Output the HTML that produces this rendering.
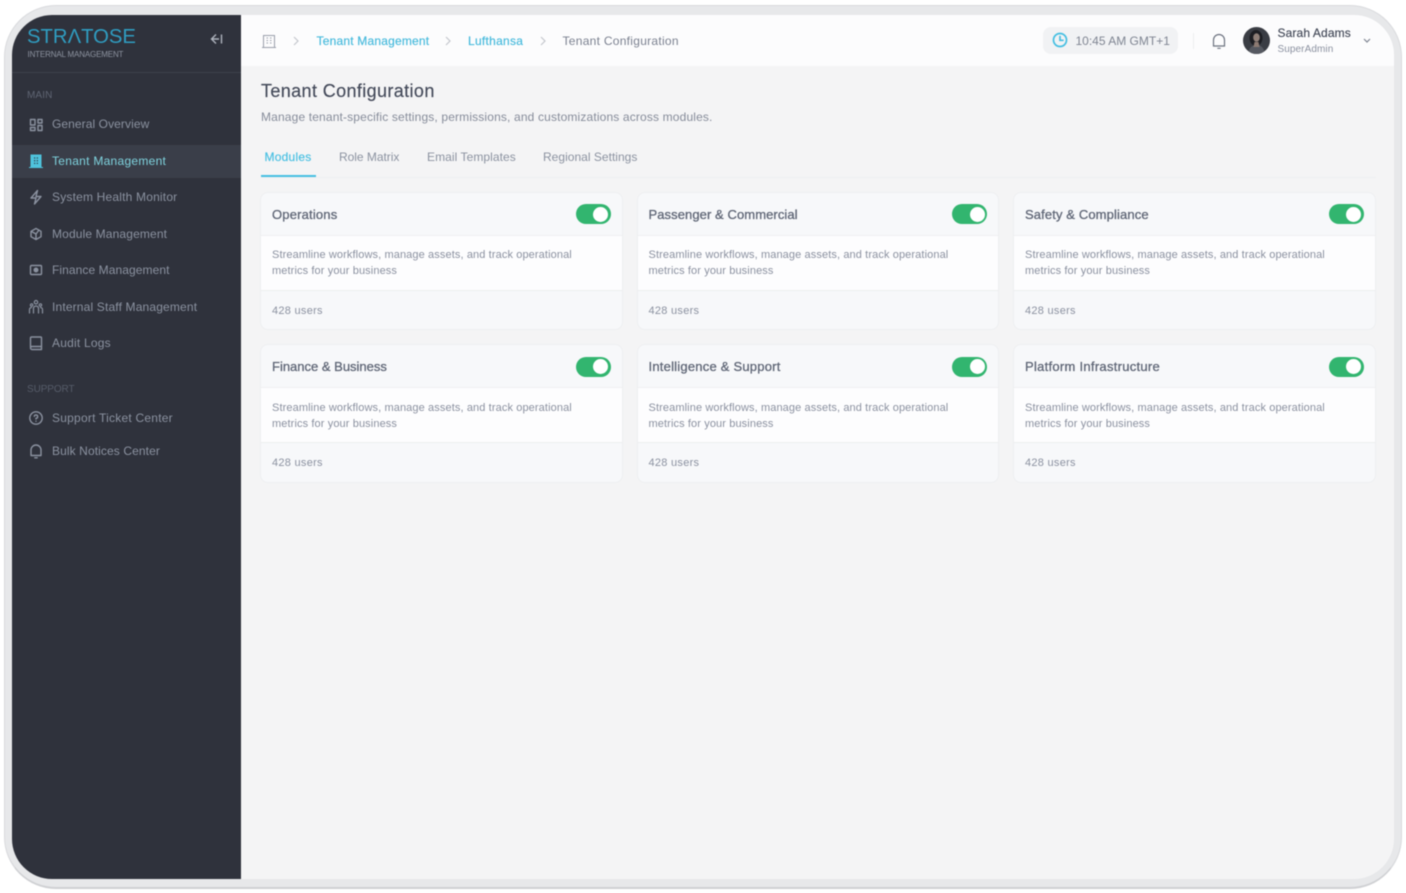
<!DOCTYPE html>
<html><head><meta charset="utf-8">
<style>
*{box-sizing:border-box;margin:0;padding:0}
html,body{width:1406px;height:893px;background:#fff;overflow:hidden;font-family:"Liberation Sans",sans-serif}
.a{position:absolute;white-space:nowrap}
#outer{position:absolute;left:4px;top:5px;width:1398px;height:884px;border-radius:52px;background:#e7e8ea;border:1px solid #d9dadd;border-bottom:2px solid #cfd0d3;filter:blur(.4px)}
#screen{position:absolute;left:12px;top:15px;width:1382px;height:864px;border-radius:40px;background:#f4f4f5;overflow:hidden;filter:blur(.5px)}
#side{position:absolute;left:0;top:0;width:229px;height:864px;background:#2f323c}
#top{position:absolute;left:229px;top:0;right:0;height:51px;background:#fcfcfd}
.nav{position:absolute;left:40px;font-size:12px;color:#8b92a0;line-height:16px;white-space:nowrap}
.sec{position:absolute;left:15px;font-size:10px;color:#5f6573;line-height:12px}
.ic{position:absolute;left:16px;width:16px;height:16px;fill:none;stroke:#8b92a0;stroke-width:1.4;stroke-linecap:round;stroke-linejoin:round}
.card{position:absolute;width:362.500px;height:138.500px;border-radius:8px;background:#f7f8fa;border:1px solid #eeeff1;overflow:hidden}
.card .t{position:absolute;left:11px;top:14px;font-size:13px;color:#5f6676;line-height:16px;font-weight:400;-webkit-text-stroke:.3px #5f6676;white-space:nowrap}
.card .b{position:absolute;left:0;right:0;top:42px;height:56px;background:#fdfdfe;border-top:1px solid #eff0f2;border-bottom:1.500px solid #eceef0}
.card .d{position:absolute;left:11px;top:11.500px;font-size:11px;letter-spacing:.11px;color:#8b91a0;line-height:16px;white-space:nowrap}
.card .u{position:absolute;left:11px;top:110px;font-size:11px;letter-spacing:.28px;color:#8b91a0;line-height:16px}
.tg{position:absolute;left:314.500px;top:11.500px;width:35px;height:20px;border-radius:10px;background:#32b56f}
.tg i{position:absolute;left:17.500px;top:2.500px;width:15px;height:15px;border-radius:50%;background:#fff}
.tab{position:absolute;top:134px;font-size:12px;color:#8b92a0;line-height:16px;white-space:nowrap}
.crumb{position:absolute;top:18px;font-size:12px;line-height:16px;white-space:nowrap}
</style></head><body>
<div id="outer"></div>
<div id="screen">
 <div id="side">
  <div class="a" style="left:15px;top:9px;font-size:20.300px;letter-spacing:0;color:#2f9cc0;line-height:26px;font-weight:400">STR&#923;TOSE</div>
  <div class="a" style="left:15.500px;top:33.500px;font-size:8px;letter-spacing:-.16px;color:#8d93a0;line-height:12px">INTERNAL MANAGEMENT</div>
  <svg class="a" style="left:196px;top:16px;stroke:#aeb3bd;fill:none;stroke-width:1.400" width="16" height="16" viewBox="0 0 16 16"><path d="M8 3.500 3.500 8 8 12.500M3.500 8H11M13.500 3.500v9"/></svg>
  <div class="a" style="left:0;top:57px;width:229px;height:1px;background:#3d414b"></div>
  <div class="sec" style="top:75px;letter-spacing:.1px">MAIN</div>

  <svg class="ic" style="top:102px" viewBox="0 0 16 16"><path d="M2.500 2.500h4.500v5.500H2.500zM10 2.500h4v3.500h-4zM10 8.500h4v5h-4zM2.500 10.500h4.500v3H2.500z"/></svg>
  <div class="nav" style="top:101px;letter-spacing:.08px">General Overview</div>

  <div class="a" style="left:0;top:130px;width:229px;height:32.500px;background:#3a3e49"></div>
  <svg class="a" style="left:16px;top:138px" width="16" height="16" viewBox="0 0 16 16"><rect x="2.500" y="1.500" width="11" height="12.500" fill="#4fc3dc"/><path d="M1 14.500h14" stroke="#4fc3dc" stroke-width="1"/><path d="M6 5h1.300M8.700 5H10M6 7.700h1.300M8.700 7.700H10M6 10.400h1.300M8.700 10.400H10" stroke="#2f4a58" stroke-width="1.300"/></svg>
  <div class="nav" style="top:138px;color:#7fd3de;letter-spacing:.28px">Tenant Management</div>

  <svg class="ic" style="top:174px" viewBox="0 0 16 16"><path d="M9.500 1.500 3 9h5l-1.500 6L13 7.500H8z"/></svg>
  <div class="nav" style="top:174px;letter-spacing:.19px">System Health Monitor</div>

  <svg class="ic" style="top:211px" viewBox="0 0 16 16"><path d="M8 2.500 13 5.300v5.400L8 13.500 3 10.700V5.300zM3 5.300 8 8v5.500M8 8l3-4"/></svg>
  <div class="nav" style="top:211px;letter-spacing:.14px">Module Management</div>

  <svg class="ic" style="top:247px" viewBox="0 0 16 16"><rect x="2.500" y="3.500" width="11" height="9" rx="1"/><circle cx="8" cy="8" r="1.800" fill="#8b92a0"/></svg>
  <div class="nav" style="top:247px;letter-spacing:.08px">Finance Management</div>

  <svg class="ic" style="top:284px;stroke-width:1.200" viewBox="0 0 16 16"><circle cx="8" cy="3.200" r="1.700"/><circle cx="3.600" cy="6" r="1.200"/><circle cx="12.400" cy="6" r="1.200"/><path d="M5.500 14V9.500a2.500 2.500 0 0 1 5 0V14M1.500 14v-3.500A2 2 0 0 1 3.500 8.500M14.500 14v-3.500a2 2 0 0 0-2-2"/></svg>
  <div class="nav" style="top:284px;letter-spacing:.16px">Internal Staff Management</div>

  <svg class="ic" style="top:320px" viewBox="0 0 16 16"><path d="M2.500 12V3a1 1 0 0 1 1-1h9a1 1 0 0 1 1 1v11.500h-9.500a1.500 1.500 0 0 1-1.500-1.500 1.500 1.500 0 0 1 1.500-1.500h9.500"/></svg>
  <div class="nav" style="top:320px;letter-spacing:.22px">Audit Logs</div>

  <div class="sec" style="top:369px;letter-spacing:-.1px;color:#565c69">SUPPORT</div>

  <svg class="ic" style="top:395px" viewBox="0 0 16 16"><circle cx="8" cy="8" r="6.200"/><path d="M6.300 6.300A1.700 1.700 0 1 1 8 8.300v.7M8 11.200v.1"/></svg>
  <div class="nav" style="top:395px;letter-spacing:.23px">Support Ticket Center</div>

  <svg class="ic" style="top:428px" viewBox="0 0 16 16"><path d="M3 12.500V7a5 5 0 0 1 10 0v5.500zM6.800 14.800h2.400"/></svg>
  <div class="nav" style="top:428px;letter-spacing:.1px">Bulk Notices Center</div>
 </div>

 <div id="top">
  <svg class="a" style="left:20px;top:18px;fill:none;stroke:#9a9fab;stroke-width:1" width="16" height="16" viewBox="0 0 16 16"><path d="M2.500 14V2.500h11V14M1 14.500h14M5.500 5h1.500M9 5h1.500M5.500 7.500h1.500M9 7.500h1.500M5.500 10h1.500M9 10h1.500"/></svg>
  <svg class="a" style="left:49px;top:20px;fill:none;stroke:#c4c7cd;stroke-width:1.200" width="12" height="12" viewBox="0 0 12 12"><path d="M4 2l4 4-4 4"/></svg>
  <div class="crumb" style="left:75.500px;color:#44b9dc;letter-spacing:.2px;-webkit-text-stroke:.15px #44b9dc">Tenant Management</div>
  <svg class="a" style="left:201px;top:20px;fill:none;stroke:#c4c7cd;stroke-width:1.200" width="12" height="12" viewBox="0 0 12 12"><path d="M4 2l4 4-4 4"/></svg>
  <div class="crumb" style="left:227px;color:#44b9dc;letter-spacing:.28px;-webkit-text-stroke:.15px #44b9dc">Lufthansa</div>
  <svg class="a" style="left:296px;top:20px;fill:none;stroke:#c4c7cd;stroke-width:1.200" width="12" height="12" viewBox="0 0 12 12"><path d="M4 2l4 4-4 4"/></svg>
  <div class="crumb" style="left:321.500px;color:#7b8190;letter-spacing:.28px">Tenant Configuration</div>

  <div class="a" style="left:802px;top:12px;width:135px;height:27px;border-radius:8px;background:#f1f2f4"></div>
  <svg class="a" style="left:810.500px;top:17px;fill:none;stroke:#45bfe2;stroke-width:1.700;stroke-linecap:round" width="16" height="16" viewBox="0 0 16 16"><circle cx="8" cy="8" r="6.500"/><path d="M8 4.500V8.300H11"/></svg>
  <div class="a" style="left:834.500px;top:18px;font-size:12px;letter-spacing:0;color:#7f8592;line-height:16px">10:45 AM GMT+1</div>
  <div class="a" style="left:952px;top:18px;width:1px;height:16px;background:#eceef0"></div>
  <svg class="a" style="left:968.500px;top:17px;fill:none;stroke:#6d7380;stroke-width:1.200;stroke-linecap:round" width="18" height="18" viewBox="0 0 18 18"><path d="M3.500 14V8a5.500 5.500 0 0 1 11 0v6zM7.800 16.300h2.400"/></svg>
  <svg class="a" style="left:1002px;top:12px" width="27" height="27" viewBox="0 0 27 27"><defs><clipPath id="c"><circle cx="13.500" cy="13.500" r="13.500"/></clipPath></defs><g clip-path="url(#c)"><rect width="27" height="27" fill="#3a3d44"/><ellipse cx="13" cy="11" rx="6.500" ry="8" fill="#1d1e23"/><ellipse cx="13.500" cy="10.500" rx="3.300" ry="4.300" fill="#8f7f78"/><path d="M5 27c1-7 5-9 8.500-9s7.500 2 8.500 9z" fill="#565961"/><path d="M11.500 15h4l1 5h-6z" fill="#8c7a72"/></g></svg>
  <div class="a" style="left:1036.500px;top:10px;font-size:12px;letter-spacing:.12px;color:#414756;line-height:16px;-webkit-text-stroke:.15px #414756">Sarah Adams</div>
  <div class="a" style="left:1036.500px;top:28px;font-size:10px;letter-spacing:.08px;color:#8b91a0;line-height:14px">SuperAdmin</div>
  <svg class="a" style="left:1120px;top:19px;fill:none;stroke:#7f8592;stroke-width:1.200" width="12" height="12" viewBox="0 0 12 12"><path d="M3 5l3 3 3-3"/></svg>
 </div>

 <div class="a" style="left:249px;top:64px;font-size:18px;letter-spacing:.38px;color:#434959;line-height:24px;-webkit-text-stroke:.15px #434959">Tenant Configuration</div>
 <div class="a" style="left:249px;top:94px;font-size:12px;letter-spacing:.15px;color:#868c9a;line-height:16px">Manage tenant-specific settings, permissions, and customizations across modules.</div>

 <div class="tab" style="left:252.500px;letter-spacing:.23px;color:#45bfe2;-webkit-text-stroke:.15px #45bfe2">Modules</div>
 <div class="tab" style="left:327px;letter-spacing:-.03px">Role Matrix</div>
 <div class="tab" style="left:415px;letter-spacing:.07px">Email Templates</div>
 <div class="tab" style="left:531px;letter-spacing:.02px">Regional Settings</div>
 <div class="a" style="left:248.500px;top:161.500px;width:1115px;height:1px;background:#eeeff1"></div>
 <div class="a" style="left:248.500px;top:160px;width:55.500px;height:2px;background:#45bfe2"></div>

 <div class="card" style="left:248px;top:176.500px"><div class="t" style="letter-spacing:.18px">Operations</div><div class="tg"><i></i></div><div class="b"><div class="d">Streamline workflows, manage assets, and track operational<br>metrics for your business</div></div><div class="u">428 users</div></div>
 <div class="card" style="left:624.500px;top:176.500px"><div class="t" style="letter-spacing:.08px">Passenger &amp; Commercial</div><div class="tg"><i></i></div><div class="b"><div class="d">Streamline workflows, manage assets, and track operational<br>metrics for your business</div></div><div class="u">428 users</div></div>
 <div class="card" style="left:1001px;top:176.500px"><div class="t" style="letter-spacing:.12px">Safety &amp; Compliance</div><div class="tg"><i></i></div><div class="b"><div class="d">Streamline workflows, manage assets, and track operational<br>metrics for your business</div></div><div class="u">428 users</div></div>
 <div class="card" style="left:248px;top:329px"><div class="t" style="letter-spacing:0">Finance &amp; Business</div><div class="tg"><i></i></div><div class="b"><div class="d">Streamline workflows, manage assets, and track operational<br>metrics for your business</div></div><div class="u">428 users</div></div>
 <div class="card" style="left:624.500px;top:329px"><div class="t" style="letter-spacing:.22px">Intelligence &amp; Support</div><div class="tg"><i></i></div><div class="b"><div class="d">Streamline workflows, manage assets, and track operational<br>metrics for your business</div></div><div class="u">428 users</div></div>
 <div class="card" style="left:1001px;top:329px"><div class="t" style="letter-spacing:.28px">Platform Infrastructure</div><div class="tg"><i></i></div><div class="b"><div class="d">Streamline workflows, manage assets, and track operational<br>metrics for your business</div></div><div class="u">428 users</div></div>
</div>
</body></html>
